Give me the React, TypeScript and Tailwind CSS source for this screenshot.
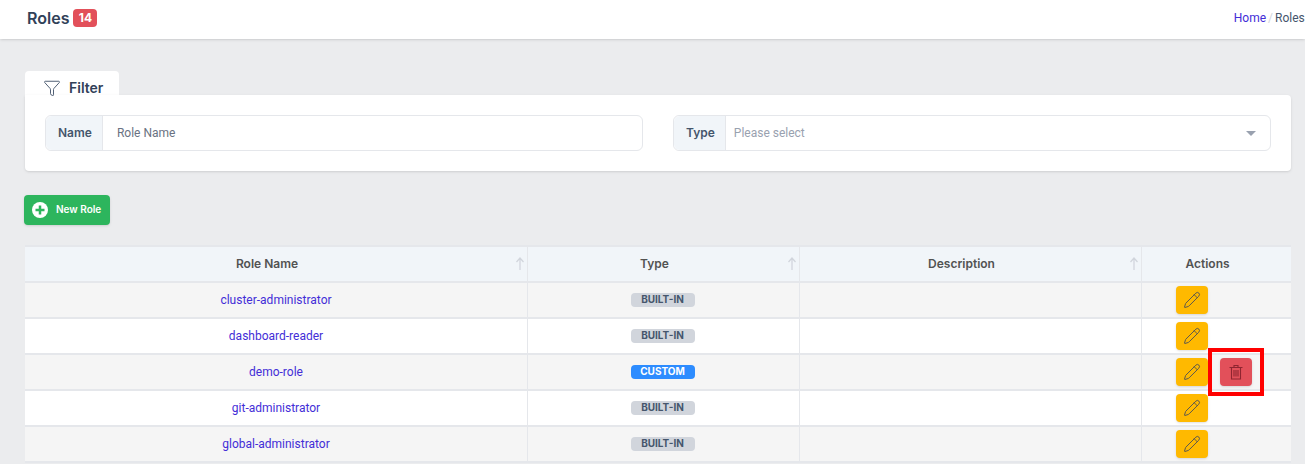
import React from 'react';
import { Filter, Pencil } from 'lucide-react';

type Role = { name: string; type: string };

const roles: Role[] = [
  { name: 'cluster-administrator', type: 'BUILT-IN' },
  { name: 'dashboard-reader', type: 'BUILT-IN' },
  { name: 'demo-role', type: 'CUSTOM' },
  { name: 'git-administrator', type: 'BUILT-IN' },
  { name: 'global-administrator', type: 'BUILT-IN' },
];

const gridCols = 'grid grid-cols-[503fr_272fr_342fr_149fr]';

const SortArrow: React.FC = () => (
  <svg viewBox="0 0 12 14" className="absolute right-px top-2.5 h-3.5 w-3 text-gray-300" fill="none" stroke="currentColor" strokeWidth="1.25">
    <path d="M6 1v12M2.5 5 6 1l3.5 4" />
  </svg>
);

const HeaderCell: React.FC<{ label: string; sortable?: boolean }> = ({ label, sortable = true }) => (
  <div className="relative flex items-center justify-center border-r border-gray-200 pr-4.5 font-semibold text-neutral-600 last:border-r-0">
    {label}
    {sortable && <SortArrow />}
  </div>
);

const TrashIcon: React.FC = () => (
  <svg viewBox="0 0 16 16" className="h-4 w-4" fill="none" stroke="#8f2530" strokeWidth="1.1">
    <path d="M1.5 3.5h13M6 3.5V1.5h4v2M3.5 3.5V15h9V3.5" />
    <path d="M6 6v6.5M8 6v6.5M10 6v6.5" />
  </svg>
);

const RoleRow: React.FC<{ role: Role; index: number }> = ({ role, index }) => (
  <div className={`${gridCols} h-9 border-b-2 border-gray-200 ${index % 2 === 0 ? 'bg-neutral-100' : 'bg-white'}`}>
    <div className="flex items-center justify-center border-r border-gray-200 font-['Roboto',sans-serif] text-indigo-700">
      {role.name}
    </div>
    <div className="flex items-center justify-center border-r border-gray-200 pr-0.5">
      <span
        className={`flex h-3.5 w-16 items-center justify-center rounded text-[10px] font-bold ${
          role.type === 'CUSTOM' ? 'bg-[#2d8cff] text-white' : 'bg-gray-300 text-slate-600'
        }`}
      >
        {role.type}
      </span>
    </div>
    <div className="border-r border-gray-200" />
    <div className="flex items-center gap-3 pl-8.5">
      <button className="flex h-7 w-8 items-center justify-center rounded bg-amber-400 shadow-sm">
        <Pencil className="h-4.5 w-4.5 text-neutral-600" strokeWidth={1.25} />
      </button>
      {role.name === 'demo-role' && (
        <button className="relative flex h-7 w-8 items-center justify-center rounded bg-[#e2505a] shadow-sm">
          <TrashIcon />
          <span className="absolute -inset-x-3 -inset-y-2.5 border-4 border-[#ff0000]" />
        </button>
      )}
    </div>
  </div>
);

const App: React.FC = () => {
  return (
    <div className="h-screen overflow-hidden bg-[#ebecee] font-['Inter',sans-serif] text-xs text-slate-700">
      <header className="flex h-9.75 items-center justify-between bg-white pb-1 pl-6.75 shadow">
        <div className="flex items-center gap-1">
          <h1 className="text-base font-semibold text-slate-700">Roles</h1>
          <span className="flex h-4.5 w-6 items-center justify-center rounded bg-[#e2505a] text-xs font-bold text-white">14</span>
        </div>
        <div className="flex gap-0.5 whitespace-nowrap font-['Roboto',sans-serif]">
          <a className="text-indigo-700">Home</a>
          <span className="text-gray-300">/</span>
          <span className="w-7.5 overflow-hidden text-slate-600">Roles</span>
        </div>
      </header>

      <main className="pl-6.25 pr-3.5 pt-8">
        <div className="flex h-6 w-23.5 items-center gap-2 rounded-t bg-white pl-4.5 pt-2.5 text-sm font-semibold">
          <Filter className="h-4.5 w-4.5 text-slate-600" strokeWidth={1.25} />
          Filter
        </div>
        <section className="grid grid-cols-2 gap-7.5 rounded-b rounded-tr bg-white p-5 shadow-sm">
          <div className="flex h-9 rounded-md border border-gray-200">
            <label className="flex items-center rounded-l-md border-r border-gray-200 bg-slate-100 pl-3 pr-2.5 font-semibold text-slate-600">
              Name
            </label>
            <input className="min-w-0 flex-1 px-3.5 font-['Roboto',sans-serif] outline-none placeholder:text-gray-500" placeholder="Role Name" />
          </div>
          <div className="flex h-9 rounded-md border border-gray-200">
            <label className="flex items-center rounded-l-md border-r border-gray-200 bg-slate-100 pl-3 pr-2.5 font-semibold text-slate-600">
              Type
            </label>
            <div className="flex flex-1 items-center justify-between pl-2 pr-3.5 font-['Roboto',sans-serif] text-gray-400">
              Please select
              <span className="border-x-[5px] border-t-[5px] border-x-transparent border-t-gray-400" />
            </div>
          </div>
        </section>

        <button className="mt-6 -ml-px flex h-7.5 w-21.5 items-center gap-2 rounded bg-[#2db55d] pl-2 text-[10px] font-semibold text-white shadow">
          <svg viewBox="0 0 16 16" className="h-4 w-4">
            <circle cx="8" cy="8" r="8" fill="white" />
            <path d="M8 3.5v9M3.5 8h9" stroke="#2db55d" strokeWidth="2.5" />
          </svg>
          New Role
        </button>

        <section className="mt-5 border-t-2 border-gray-200 bg-white">
          <div className={`${gridCols} h-9 border-b-2 border-gray-200 bg-slate-100`}>
            <HeaderCell label="Role Name" />
            <HeaderCell label="Type" />
            <HeaderCell label="Description" />
            <HeaderCell label="Actions" sortable={false} />
          </div>
          {roles.map((role, index) => (
            <RoleRow key={role.name} role={role} index={index} />
          ))}
        </section>
      </main>
    </div>
  );
};

export default App;
